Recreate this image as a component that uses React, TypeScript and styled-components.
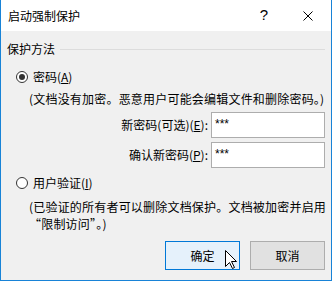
import React from "react";
import styled, { createGlobalStyle } from "styled-components";

const Global = createGlobalStyle`
  html, body { margin: 0; padding: 0; background: #f0f0f0; }
  * { box-sizing: border-box; }
`;

const FONT = `"Noto Sans CJK SC", "Noto Sans", sans-serif`;

const Window = styled.div`
  width: 332px;
  height: 281px;
  display: flex;
  flex-direction: column;
  border: 1px solid #1883d7;
  border-top: none;
  font-family: ${FONT};
  font-size: 12px;
  color: #000;
  background: #f0f0f0;
  overflow: hidden;
`;

const TitleBar = styled.div`
  height: 31px;
  flex: none;
  background: #fff;
  display: flex;
  align-items: center;
  padding-left: 7px;
  line-height: 16px;
`;

const Title = styled.div`
  flex: 1;
`;

const HelpGlyph = styled.div`
  width: 12px;
  font-family: "Liberation Sans", sans-serif;
  font-size: 15px;
  margin-right: 33px;
  text-align: center;
  margin-top: -1px;
`;

const CloseBox = styled.div`
  width: 10px;
  height: 10px;
  margin-right: 18px;
  display: flex;
`;

const Body = styled.div`
  flex: 1;
  display: flex;
  flex-direction: column;
  padding: 10px 6px 0 6px;
`;

const GroupHeader = styled.div`
  display: flex;
  align-items: center;
  height: 16px;
  line-height: 16px;
`;

const GroupLine = styled.div`
  flex: 1;
  height: 1px;
  background: #dcdcdc;
  margin-left: 5px;
`;

const RadioRow = styled.div<{ $top: number }>`
  display: flex;
  align-items: center;
  height: 16px;
  line-height: 16px;
  margin-top: ${(p) => p.$top}px;
  margin-left: 9px;
  gap: 5px;
`;

const RadioCircle = styled.span<{ $checked?: boolean }>`
  width: 12px;
  height: 12px;
  border-radius: 50%;
  border: 1px solid #333;
  background: #fff;
  display: flex;
  align-items: center;
  justify-content: center;
  &::after {
    content: "";
    width: 6px;
    height: 6px;
    border-radius: 50%;
    background: ${(p) => (p.$checked ? "#333" : "transparent")};
  }
`;

const Desc = styled.div<{ $top: number; $lh: number }>`
  margin-top: ${(p) => p.$top}px;
  margin-left: 22px;
  line-height: ${(p) => p.$lh}px;
  letter-spacing: 0.2px;
  white-space: pre;
`;

const Fields = styled.div`
  margin-top: 5px;
  display: grid;
  grid-template-columns: auto 114px;
  justify-content: end;
  column-gap: 3px;
  row-gap: 4px;
  align-items: center;
`;

const FieldLabel = styled.div`
  text-align: right;
  line-height: 16px;
`;

const TextBox = styled.div`
  height: 26px;
  border: 1px solid #adadad;
  background: #fff;
  padding: 3px 0 0 3px;
  line-height: 16px;
  font-family: "Liberation Sans", sans-serif;
  font-size: 12px;
`;

const U = styled.span`
  text-decoration: underline;
  text-underline-offset: 1px;
`;

const ButtonRow = styled.div`
  margin-top: 9px;
  display: flex;
  justify-content: flex-end;
  gap: 10px;
`;

const Button = styled.div<{ $primary?: boolean }>`
  position: relative;
  width: 75px;
  height: 29px;
  display: flex;
  align-items: center;
  justify-content: center;
  border: 1px solid ${(p) => (p.$primary ? "#0078d7" : "#adadad")};
  background: ${(p) => (p.$primary ? "#e5f1fb" : "#e1e1e1")};
  line-height: 16px;
`;

const Cursor = styled.svg`
  position: absolute;
  left: 59px;
  top: 8px;
`;

export default function App() {
  return (
    <>
      <Global />
      <Window>
        <TitleBar>
          <Title>启动强制保护</Title>
          <HelpGlyph>?</HelpGlyph>
          <CloseBox>
            <svg width="10" height="10" viewBox="0 0 10 10">
              <path d="M0.5 0.5 L9.5 9.5 M9.5 0.5 L0.5 9.5" stroke="#000" strokeWidth="1" />
            </svg>
          </CloseBox>
        </TitleBar>
        <Body>
          <GroupHeader>
            <span>保护方法</span>
            <GroupLine />
          </GroupHeader>
          <RadioRow $top={12}>
            <RadioCircle $checked />
            <span>
              密码(<U>A</U>)
            </span>
          </RadioRow>
          <Desc $top={6} $lh={16}>(文档没有加密。恶意用户可能会编辑文件和删除密码。)</Desc>
          <Fields>
            <FieldLabel>
              新密码(可选)(<U>E</U>):
            </FieldLabel>
            <TextBox>***</TextBox>
            <FieldLabel>
              确认新密码(<U>P</U>):
            </FieldLabel>
            <TextBox>***</TextBox>
          </Fields>
          <RadioRow $top={7}>
            <RadioCircle />
            <span>
              用户验证(<U>I</U>)
            </span>
          </RadioRow>
          <Desc $top={7} $lh={17}>
            {"(已验证的所有者可以删除文档保护。文档被加密并启用\n“限制访问”。)"}
          </Desc>
          <ButtonRow>
            <Button $primary>
              确定
              <Cursor width="13" height="20" viewBox="0 0 13 20">
                <path
                  d="M0.5 0.5 L0.5 16.5 L4.5 12.5 L7.5 18.5 L9.5 17.5 L6.5 11.5 L11.5 11.5 Z"
                  fill="#fff"
                  stroke="#000"
                  strokeWidth="1"
                  strokeLinejoin="miter"
                />
              </Cursor>
            </Button>
            <Button>取消</Button>
          </ButtonRow>
        </Body>
      </Window>
    </>
  );
}
